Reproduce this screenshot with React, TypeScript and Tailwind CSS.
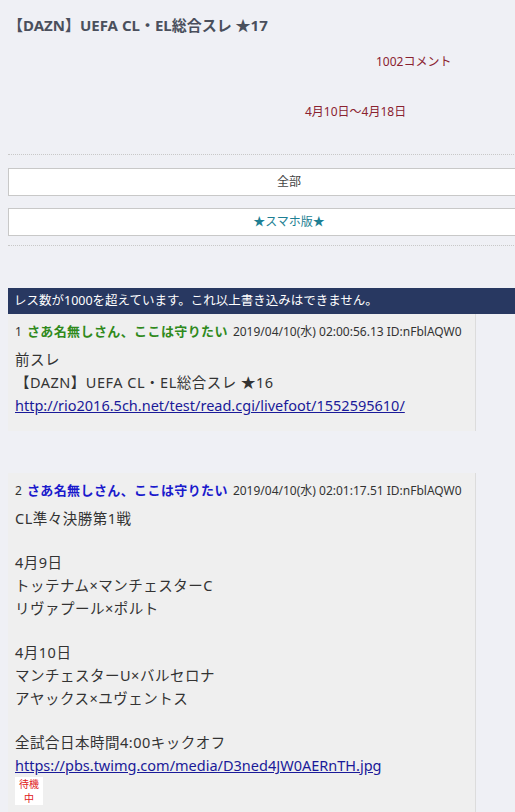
const FONT = "font-['Noto_Sans','Noto_Sans_CJK_JP',sans-serif]";

type Post = {
  no: number;
  name: string;
  nameColor: string;
  date: string;
  id: string;
  lines: (string | { link: string } | null)[];
  waiting?: boolean;
};

const posts: Post[] = [
  {
    no: 1,
    name: "さあ名無しさん、ここは守りたい",
    nameColor: "text-[#2f8a1c]",
    date: "2019/04/10(水) 02:00:56.13",
    id: "ID:nFblAQW0",
    lines: [
      "前スレ",
      "【DAZN】UEFA CL・EL総合スレ ★16",
      { link: "http://rio2016.5ch.net/test/read.cgi/livefoot/1552595610/" },
    ],
  },
  {
    no: 2,
    name: "さあ名無しさん、ここは守りたい",
    nameColor: "text-[#1a1acc]",
    date: "2019/04/10(水) 02:01:17.51",
    id: "ID:nFblAQW0",
    lines: [
      "CL準々決勝第1戦",
      null,
      "4月9日",
      "トッテナム×マンチェスターC",
      "リヴァプール×ポルト",
      null,
      "4月10日",
      "マンチェスターU×バルセロナ",
      "アヤックス×ユヴェントス",
      null,
      "全試合日本時間4:00キックオフ",
      { link: "https://pbs.twimg.com/media/D3ned4JW0AERnTH.jpg" },
    ],
    waiting: true,
  },
];

function PostBox({ post }: { post: Post }) {
  return (
    <article className="w-[468px] border-r border-[#dcdcdc] bg-[#efefef] px-[7px] pt-[6px] pb-[14px]">
      <div className="flex items-baseline gap-[5px] whitespace-nowrap leading-[22px]">
        <span className="text-[12px] text-[#333]">{post.no}</span>
        <span className={`text-[13px] font-bold tracking-[0.4px] ${post.nameColor}`}>{post.name}</span>
        <span className="text-[12px] text-[#333]">
          {post.date} {post.id}
        </span>
      </div>
      <div className="mt-[5px] text-[14.5px] leading-[23px] tracking-[0.5px] text-[#333]">
        {post.lines.map((line, i) => {
          if (line === null) return <div key={i} className="h-[21px]" />;
          if (typeof line === "string") return <div key={i}>{line}</div>;
          return (
            <div key={i}>
              <a href="#" className="tracking-normal text-[#1a1a99] underline">
                {line.link}
              </a>
            </div>
          );
        })}
        {post.waiting && (
          <div className="mb-[4px] h-[28px] w-[28px] bg-white text-center text-[10px] leading-[14px] tracking-normal text-[#e02020]">
            待機
            <br />中
          </div>
        )}
      </div>
    </article>
  );
}

export default function App() {
  return (
    <div className={`min-h-screen w-[515px] overflow-hidden bg-[#eff0f5] ${FONT}`}>
      <div className="w-[578px] px-2">
        <h1 className="pt-[13px] text-[15px] font-bold leading-[24px] text-[#4a4f5c]">
          【DAZN】UEFA CL・EL総合スレ ★17
        </h1>

        <p className="mt-[16px] pl-[368px] text-[12px] leading-[18px] text-[#8a2230]">1002コメント</p>
        <p className="mt-[32px] pl-[297px] text-[12px] leading-[18px] text-[#8a2230]">4月10日～4月18日</p>

        <div className="mt-[33px] border-t border-dotted border-[#c8c8c8]" />

        <div className="mt-[13px] flex flex-col gap-[12px]">
          <button
            type="button"
            className="h-[28px] w-full border border-[#c8c8c8] bg-white text-[12px] text-[#444]"
          >
            全部
          </button>
          <button
            type="button"
            className="h-[28px] w-full border border-[#c8c8c8] bg-white text-[12px] text-[#1e7f94]"
          >
            ★スマホ版★
          </button>
        </div>

        <div className="mt-[9px] border-t border-dotted border-[#c8c8c8]" />

        <div className="mt-[42px] flex h-[26px] items-center bg-[#283861] px-[6px] text-[12.5px] text-white">
          レス数が1000を超えています。これ以上書き込みはできません。
        </div>

        <div className="flex flex-col gap-[42px]">
          {posts.map((post) => (
            <PostBox key={post.no} post={post} />
          ))}
        </div>
      </div>
    </div>
  );
}
